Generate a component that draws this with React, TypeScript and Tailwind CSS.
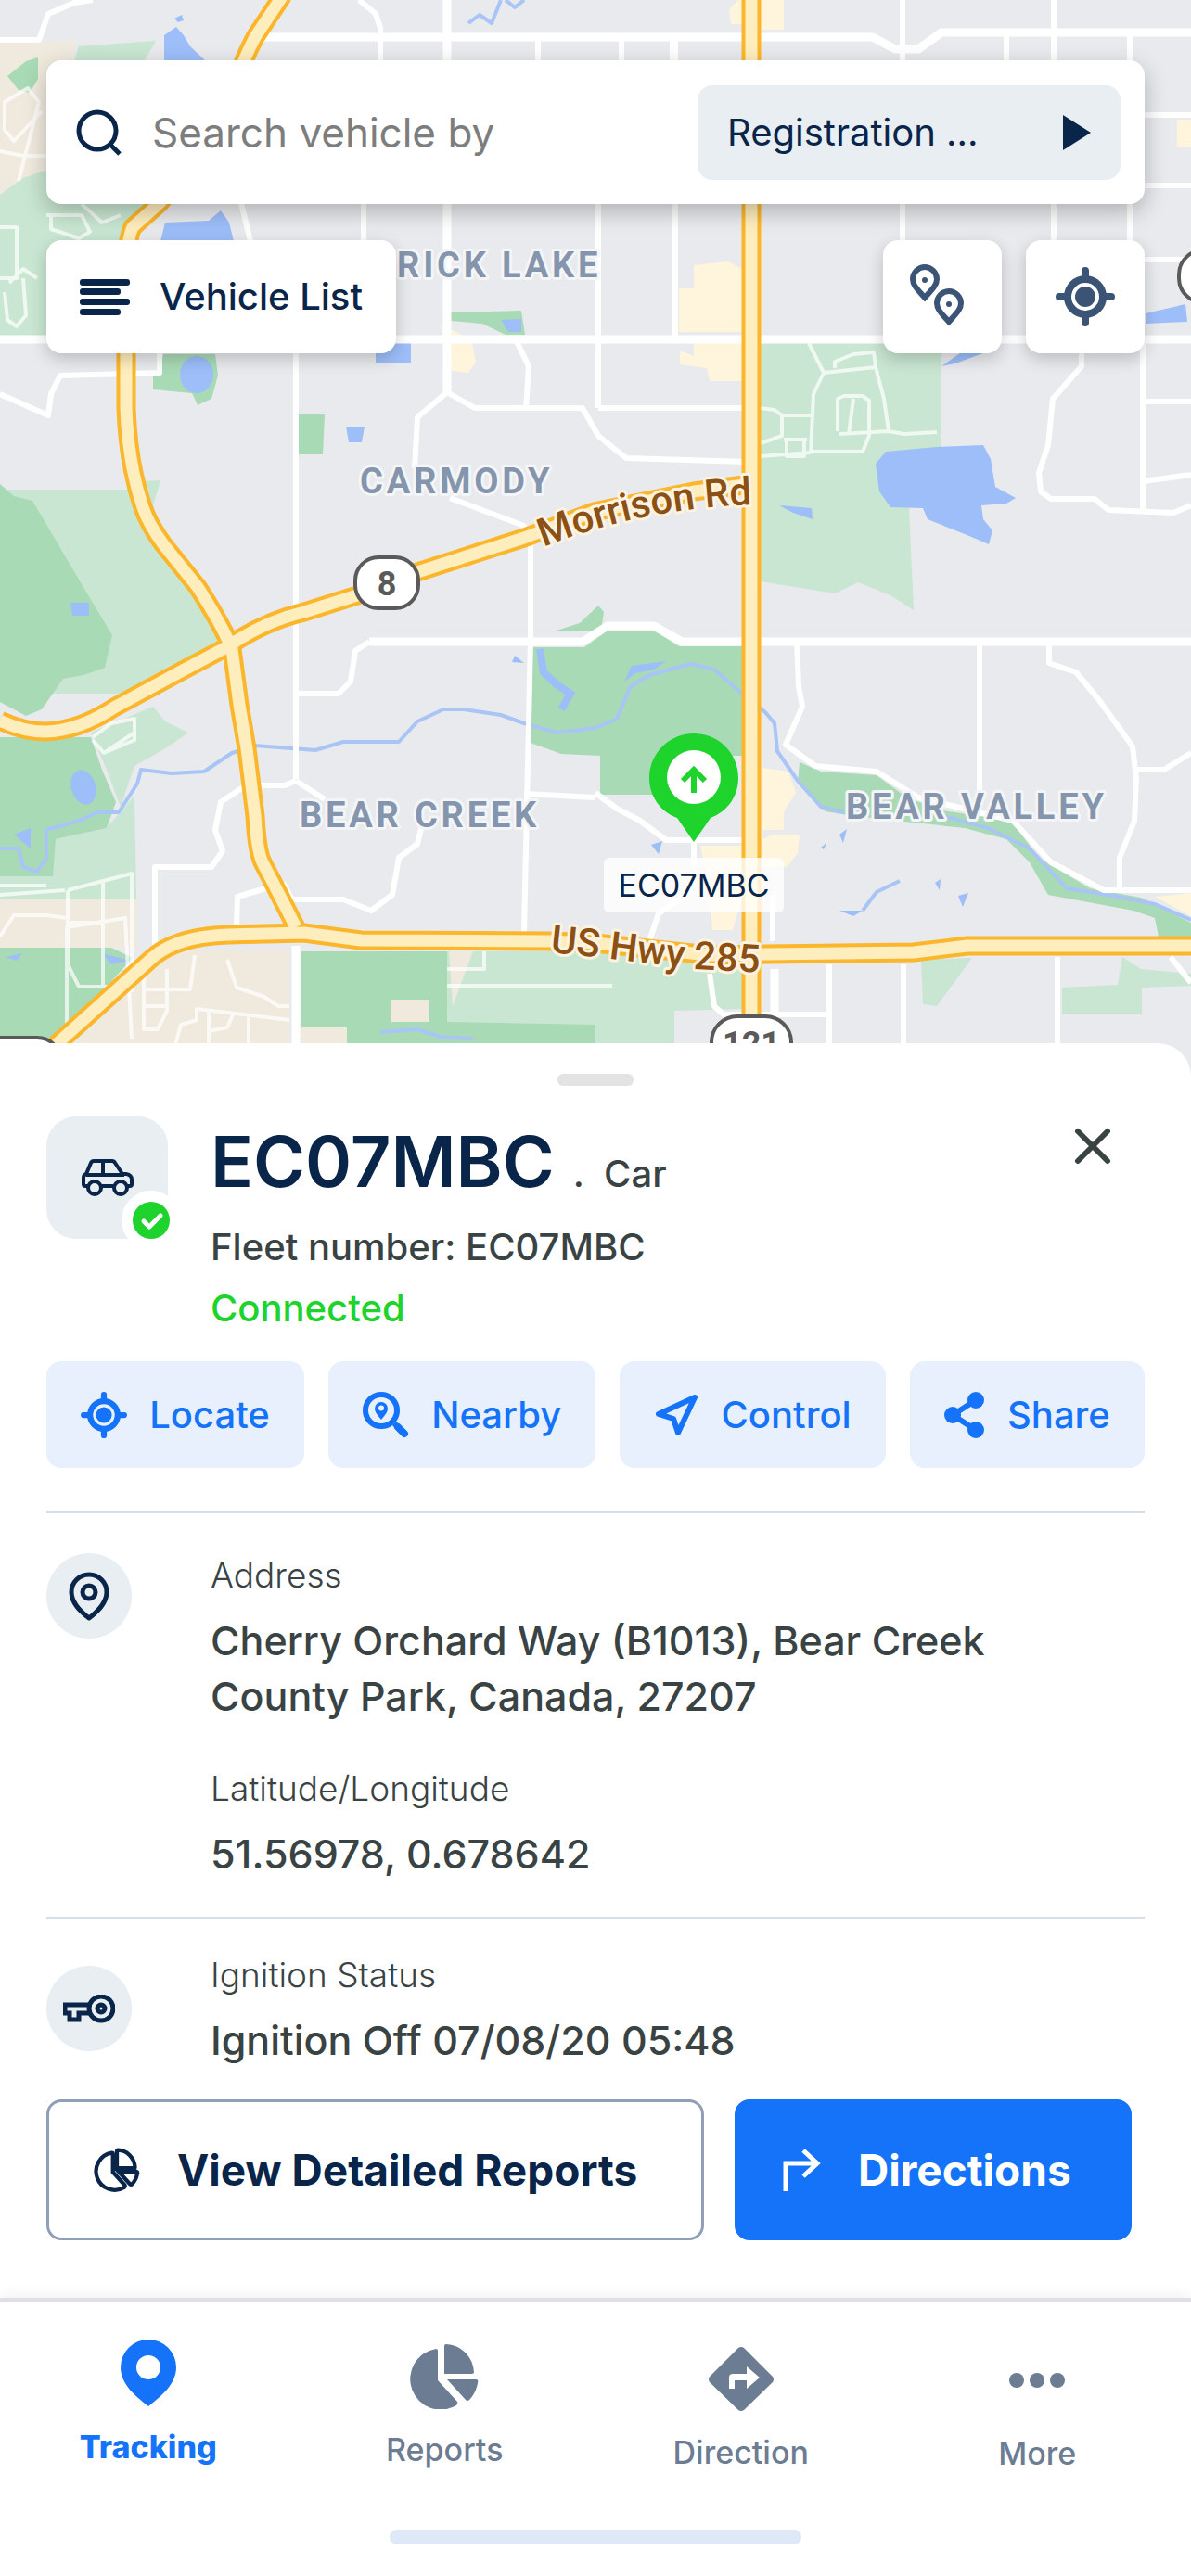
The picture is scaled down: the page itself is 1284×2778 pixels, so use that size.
import type { ReactNode } from "react";

const minorRoads = [
  "M0 43H42L52 15L80 3L100 0",
  "M387 0L405 15L410 30V65",
  "M580 40V65M670 40V65M725 40V65M1085 36V65",
  "M973 0V366M1136 0V366M1218 36V366",
  "M392 219V260M645 219V440M728 40V362",
  "M260 219L270 260M1234 124H1284M1234 200H1284M1234 280H1284",
  "M319 366V840M172 366V402L65 405L55 425L52 448L0 425",
  "M556 366L570 395L567 440M482 423L512 440H628L645 470L675 494L805 498",
  "M482 423L450 450L447 505M485 537L565 567L572 590V690L565 1005",
  "M319 748H365L378 735L383 702L398 692",
  "M645 440H805M1166 366V395L1135 430L1130 480L1120 510L1122 530L1133 538H1180L1195 550L1265 553L1284 545",
  "M1232 366V550M1232 433H1284M1232 519L1284 512",
  "M859 692L861 740L865 762L847 803L879 826L945 832L990 860L1092 885L1133 930L1190 960H1284",
  "M1056 692V853M1131 692V715L1160 725L1185 755L1221 805L1225 840L1223 885L1207 925V960M1225 830H1255L1284 812",
  "M642 855L665 872L690 885L718 906H805M748 906V960L710 985L700 1015M833 965V1015M565 856L642 860",
  "M319 842L307 847H265L238 865L232 895L240 918L228 935H167V1020M319 842L350 862",
  "M455 890L450 910L430 925L423 965L400 982L370 970H315L305 952M290 957L256 967L255 1000",
  "M765 1050L770 1085L780 1094H893M894 1040V1165M974 1040V1165M1140 1032V1165M1262 1032L1284 1060",
];

const majorRoads = [
  "M283 40H941L965 53H990L1015 35H1284",
  "M0 366H1284M482 0V423",
  "M398 692H628L655 675H705L735 692H1284",
  "M319 1020V1165M835 1045V1092",
];

const highways = [
  "M305 -5L275 40Q262 65 258 80L240 130L205 180L172 219L143 245Q136 260 136 300V440Q138 500 154 547Q160 565 176 587L213 633Q240 675 250 700L258 760L266 807L275 880Q277 920 284 932L295 953L319 1000",
  "M0 777Q25 789 49 789Q85 788 123 763L197 723L246 697Q285 670 328 660L385 642L450 617L565 580L640 552L748 530L810 522",
  "M810 -5V1100",
  "M40 1145L123 1070L164 1033Q190 1010 246 1008L328 1006L389 1014L592 1015L642 1017L765 1030L826 1029L985 1027L1043 1020H1290",
];

const lanes = [
  "M20 195L42 110L30 95L5 110V140L15 152L45 120M0 163L25 168H50",
  "M50 232H88L97 250L85 257L55 247V232M88 220L110 240L130 232M0 245H18V300H0M10 305L25 290L40 300M5 315L8 345L18 352L28 340L25 300",
  "M872 370L888 402L877 425L874 488L820 492M900 397V390L920 382L942 380L944 396L888 402M944 396L953 430L958 465L975 468L1010 466M958 465L905 468M903 465V430L910 427H930L937 432V470L930 487H874M920 430L915 468M874 448H843V470L820 478M845 474H870M848 474V492H867V475M820 440L835 442L843 448",
  "M72 1140V1000L135 990L142 1120M73 960L142 942V1070M111 948V1064M73 995H111M73 960V1040L85 1064H140M0 1010L15 987H50L73 990M0 955H50M0 965L70 960",
  "M100 798L112 812L145 798V775L120 780L100 795M112 812L145 790",
  "M155 1045V1110H170L180 1090V1045M155 1067H205L210 1030M155 1085H180M245 1035L255 1065L285 1075L300 1085H312M188 1130L195 1105L212 1100V1088L312 1100M225 1090V1125M268 1095V1130M225 1112L245 1108L252 1092",
  "M482 1045H522V1026M482 1063H660",
];

function FleetMap() {
  return (
    <svg
      viewBox="0 0 1284 1165"
      className="block w-full bg-[#e8eaed] font-['Roboto',sans-serif]"
      role="img"
      aria-label="Map of Bear Creek"
    >
      <g fill="#f0eade">
        <path d="M0 44H82L78 65L60 185L20 195L0 210ZM0 970H148V1022H0ZM40 1165L165 1045L190 1025H312V1165Z" />
      </g>
      <g fill="#c8e6d1">
        <path d="M85 50L168 44L155 66H80ZM0 210L25 192L60 180L180 200L130 262L126 362H0Z" />
        <path d="M0 528H140L155 519L173 518L165 545L190 610L242 690L140 748H0Z" />
        <path d="M98 790L165 762L178 778L203 790L180 806L145 826L130 870L115 830ZM58 910L60 905L115 893L145 858L147 970H0V945H57Z" />
        <path d="M820 370H1015V485L980 550L985 658L960 642L925 628L900 640L820 627Z" />
        <path d="M993 1035L1048 1033L1010 1085L995 1083ZM1145 1065L1205 1062L1210 1032L1230 1045L1284 1050V1063L1231 1065V1093H1145Z" />
      </g>
      <g fill="#a8dab5">
        <path d="M8 82L28 66L41 62V85L32 100L20 97ZM0 522L15 535L35 540L85 625L121 685L113 720L90 728L68 732L45 765L28 772L0 757Z" />
        <path d="M0 795H98L110 830L125 865L115 893L60 905L57 945H0ZM0 1022H120L143 1033L50 1135H0Z" />
        <path d="M176 382H232L235 405L228 430L213 437L207 424L165 420V406L172 402ZM320 447H350L348 490H322ZM486 337L562 335L566 361H545L520 349L486 346Z" />
        <path d="M600 680L625 672L645 653L651 660L648 680ZM574 698H630L655 680H705L732 697H800V815H786V857H647V815L605 813L572 801Z" />
        <path d="M862 822L885 832L945 836L975 858L1010 873L1090 885L1120 925L1175 958L1230 968L1284 995V1010H1249L1245 990L1222 982L1130 965L1110 930L1085 905L1040 893L920 880L890 875L860 845Z" />
        <path d="M325 1026H642V1165H325Z" />
      </g>
      <path fill="#c8e6d1" d="M482 1026H770L800 1050V1088L727 1090V1165H642V1105L482 1102Z" />
      <path fill="#f0eade" d="M422 1078H463V1102H422ZM325 1107H374V1130H325ZM484 1026H510L488 1085Z" />
      <g fill="#fef5dc">
        <path d="M748 286L785 282L800 290V358H732V311H748ZM748 370H800V411H765L762 397L733 393V378L748 384ZM786 10L796 0H845V32H820V26H788Z" />
        <path d="M475 350L508 366L513 390L505 402L487 400L478 366ZM822 828L850 832L858 855L845 875V895H822ZM833 900H862L860 920L848 935H822V905ZM755 912H802V960L790 1003H768L765 960ZM1245 967L1284 963V988ZM1269 129H1284V158H1269Z" />
      </g>
      <g fill="#9dbef9">
        <path d="M177 66V38L190 29L198 38L205 50L222 66ZM188 20L196 16L198 22L192 24ZM173 260L178 240L225 238L238 227L247 240L252 260ZM405 370H443V391H405ZM540 345L562 344V358H548ZM373 460H393L390 477H376ZM76 650H96V664H78Z" />
        <path d="M944 500L955 487L1010 482L1060 480L1068 495L1073 525L1095 537L1085 543L1058 545L1060 560L1070 572L1066 587L1045 578L1000 560L995 548L960 547L948 530Z" />
        <path d="M840 545L875 548L876 560L855 553ZM1015 395L1035 381L1065 379L1030 392ZM1235 338L1278 328L1280 347L1235 349ZM681 718L718 713L705 722L685 726L673 735ZM15 900L33 893V915ZM110 1028L140 1036L120 1040ZM6 1032L24 1028L18 1036ZM702 911L714 907L710 921ZM905 900L913 894L909 909ZM885 914L891 909L888 916ZM905 982H930L920 988ZM1033 966L1044 963L1038 978ZM1008 952L1014 948L1013 960ZM555 707L565 715L552 714Z" />
        <ellipse cx="212" cy="404" rx="18" ry="20" />
        <ellipse cx="90" cy="849" rx="13" ry="19" transform="rotate(-16 90 849)" />
      </g>
      <g fill="none" stroke="#a9c5f6" strokeWidth="4" strokeLinejoin="round">
        <path d="M0 915H20L25 935L40 940L50 925V895L85 885L105 876H128L148 845L152 830L185 834L220 832L250 812L275 804L340 809L370 800H430L450 778L478 765H500L540 771L565 780L600 790L642 785L665 775L680 740L700 728L745 716L770 722L800 748L825 768L835 780L838 810L860 842L885 870L910 876" />
        <path d="M1010 878L1065 893L1110 915L1150 958L1200 966L1245 975L1284 992M930 982L945 962L970 950M505 25L517 16L530 25L540 0M545 0L555 8L565 0M410 1113L450 1110L475 1118L510 1120" />
      </g>
      <path d="M582 700L586 725L600 738L615 748L605 765" fill="none" stroke="#9dbef9" strokeWidth="8" />

      <g fill="none" stroke="#ffffff" strokeOpacity="0.7" strokeWidth="4" strokeLinejoin="round">
        {lanes.map((d) => (
          <path key={d} d={d} />
        ))}
      </g>
      <g fill="none" stroke="#ffffff" strokeWidth="6" strokeLinejoin="round">
        {minorRoads.map((d) => (
          <path key={d} d={d} />
        ))}
      </g>
      <g fill="none" stroke="#ffffff" strokeWidth="9" strokeLinejoin="round">
        {majorRoads.map((d) => (
          <path key={d} d={d} />
        ))}
      </g>
      <g fill="none" stroke="#fbb62b" strokeWidth="21" strokeLinejoin="round">
        {highways.map((d) => (
          <path key={d} d={d} />
        ))}
      </g>
      <g fill="none" stroke="#feedbd" strokeWidth="13" strokeLinejoin="round">
        {highways.map((d) => (
          <path key={d} d={d} />
        ))}
      </g>

      {/* route shields */}
      <g fill="#ffffff" stroke="#5a5a5a" strokeWidth="4">
        <rect x="383" y="601" width="68" height="55" rx="25" />
        <rect x="767" y="1096" width="86" height="64" rx="28" />
        <rect x="1271" y="270" width="80" height="56" rx="26" />
        <rect x="-30" y="1119" width="96" height="56" rx="26" />
      </g>
      <g fill="#5a5a5a" textAnchor="middle" className="text-[36px] font-bold">
        <text x="417" y="642">8</text>
        <text x="810" y="1138">121</text>
      </g>

      <g
        fill="#8595ad"
        stroke="#f4f5f7"
        strokeWidth="6"
        strokeLinejoin="round"
        paintOrder="stroke"
        className="text-[38px] font-bold tracking-widest"
      >
        <text x="400" y="299">BRICK LAKE</text>
        <text x="388" y="532">CARMODY</text>
        <text x="323" y="892">BEAR CREEK</text>
        <text x="912" y="883">BEAR VALLEY</text>
      </g>

      <path id="morrison" d="M586 590Q690 548 815 544" fill="none" />
      <path id="hwy285" d="M593 1027L650 1033L750 1045L840 1050" fill="none" />
      <g
        fill="#8c5014"
        stroke="#fdf3e0"
        strokeWidth="6"
        strokeLinejoin="round"
        paintOrder="stroke"
        className="text-[42px] font-medium"
      >
        <text>
          <textPath href="#morrison">Morrison Rd</textPath>
        </text>
        <text>
          <textPath href="#hwy285">US Hwy 285</textPath>
        </text>
      </g>

      {/* vehicle pin */}
      <path
        fill="#1dd32c"
        d="M748 791C722 791 700 812 700 839C700 858 711 875 730 882L748 908L766 882C785 875 796 858 796 839C796 812 774 791 748 791Z"
      />
      <circle cx="748" cy="838" r="29" fill="#ffffff" />
      <path d="M748 855V831M736 842L748 830L760 842" fill="none" stroke="#1dd32c" strokeWidth="6" />
      <rect x="651" y="925" width="194" height="59" rx="6" fill="#ffffff" fillOpacity="0.8" />
      <text
        x="748"
        y="967"
        textAnchor="middle"
        fill="#0a254a"
        className="font-['Inter',sans-serif] text-[34px]"
      >
        EC07MBC
      </text>
    </svg>
  );
}

function LocateIcon({ className }: { className: string }) {
  return (
    <svg viewBox="0 0 64 64" className={className} fill="none" stroke="currentColor" aria-hidden="true">
      <circle cx="32" cy="32" r="19" strokeWidth="8" />
      <circle cx="32" cy="32" r="11" fill="currentColor" stroke="none" />
      <path d="M32 4V12M32 52V60M4 32H12M52 32H60" strokeWidth="8" strokeLinecap="round" />
    </svg>
  );
}

function PinsIcon() {
  return (
    <svg viewBox="0 0 72 70" className="h-[70px] w-[72px]" fill="none" stroke="currentColor" strokeWidth="6" aria-hidden="true">
      <path d="M17 36C10 28 4 23 4 16C4 9 10 3 17 3S30 9 30 16C30 23 24 28 17 36Z" />
      <path d="M43 62C36 54 30 49 30 42C30 35 36 29 43 29S56 35 56 42C56 49 50 54 43 62Z" />
      <circle cx="17" cy="17" r="3" fill="currentColor" stroke="none" />
      <circle cx="43" cy="43" r="3" fill="currentColor" stroke="none" />
    </svg>
  );
}

function NearbyIcon() {
  return (
    <svg viewBox="0 0 50 50" className="size-[50px]" fill="none" stroke="currentColor" aria-hidden="true">
      <circle cx="20" cy="20" r="17" strokeWidth="6" />
      <path d="M34 34L37 37" strokeWidth="6" />
      <path d="M38 38L45 45" strokeWidth="8" strokeLinecap="round" />
      <path
        fill="currentColor"
        stroke="none"
        fillRule="evenodd"
        d="M20 30C16 25 13 22 13 18A7 7 0 0 1 27 18C27 22 24 25 20 30ZM20 14.500A3 3 0 1 0 20 20.500A3 3 0 1 0 20 14.500Z"
      />
    </svg>
  );
}

function ControlIcon() {
  return (
    <svg viewBox="0 0 48 48" className="size-[48px]" fill="none" stroke="currentColor" strokeWidth="6" strokeLinejoin="round" aria-hidden="true">
      <path d="M43 5L4 23L20 28L25 43Z" />
    </svg>
  );
}

function ShareIcon() {
  return (
    <svg viewBox="0 0 44 50" className="h-[50px] w-[44px]" fill="currentColor" aria-hidden="true">
      <path d="M34 9L9 25L34 41" fill="none" stroke="currentColor" strokeWidth="6" />
      <circle cx="34" cy="9" r="9" />
      <circle cx="9" cy="25" r="9" />
      <circle cx="34" cy="41" r="9" />
    </svg>
  );
}

function CarIcon() {
  return (
    <svg viewBox="0 0 56 40" className="h-[40px] w-[56px]" fill="none" stroke="currentColor" strokeWidth="4" strokeLinejoin="round" aria-hidden="true">
      <path d="M7 29H4Q2 29 2 27V20Q2 17 5 16L10 4Q11 2 13 2H33Q35 2 36 4L44 16H48Q54 17 54 22V27Q54 29 52 29H50" />
      <path d="M5 17H46M23 2V16M22 29H35" />
      <circle cx="14" cy="31" r="7" />
      <circle cx="42" cy="31" r="7" />
    </svg>
  );
}

function AddressIcon() {
  return (
    <svg viewBox="0 0 44 53" className="h-[53px] w-[44px]" fill="none" stroke="currentColor" strokeWidth="5" strokeLinejoin="round" aria-hidden="true">
      <path d="M22 50C13 43 3 34 3 22A19 19 0 0 1 41 22C41 34 31 43 22 50Z" />
      <circle cx="22" cy="22" r="7" />
    </svg>
  );
}

function KeyIcon() {
  return (
    <svg viewBox="0 0 56 31" className="h-[31px] w-[56px]" fill="none" stroke="currentColor" strokeWidth="5" aria-hidden="true">
      <path d="M29 11H2V20H7V27H17V20H29" />
      <circle cx="41" cy="15" r="13" />
      <circle cx="41" cy="15" r="4" />
    </svg>
  );
}

const pieSlices =
  "M28 5Q30 5 30 7V39L51 62Q52 64 50 66A33 33 0 1 1 28 5ZM37 2Q37 0 39 0A31 32 0 0 1 69 30Q69 32 67 32H37ZM40 38H72Q74 39 73 42A34 34 0 0 1 64 60Q62 62 60 60Z";

function VehicleHeader() {
  return (
    <div className="flex items-start">
      <div className="relative flex h-[132px] w-[131px] shrink-0 items-center justify-center rounded-4xl bg-[#e9eef2] text-[#0a254a]">
        <CarIcon />
        <span className="absolute -right-[14px] -bottom-3 flex size-[64px] items-center justify-center rounded-full bg-white">
          <svg viewBox="0 0 40 40" className="size-[40px]" aria-hidden="true">
            <circle cx="20" cy="20" r="20" fill="#1dd32c" />
            <path d="M12 21L18 27L30 15" fill="none" stroke="#ffffff" strokeWidth="5" strokeLinecap="round" strokeLinejoin="round" />
          </svg>
        </span>
      </div>
      <div className="ml-[46px] grow pt-2 text-[#3a4344]">
        <div className="flex items-baseline gap-5">
          <h1 className="text-[76px] leading-[80px] font-semibold text-[#0a254a]">EC07MBC</h1>
          <span className="text-[40px] leading-none font-medium">.&nbsp; Car</span>
        </div>
        <p className="mt-5 text-[40px] leading-[66px] font-medium">Fleet number: EC07MBC</p>
        <p className="text-[40px] leading-[66px] font-medium text-[#1dd32c]">Connected</p>
      </div>
      <button aria-label="Close" className="mt-1 mr-7 p-2 text-[#3a4344]">
        <svg viewBox="0 0 40 40" className="size-[40px]" stroke="currentColor" strokeWidth="6" strokeLinecap="round">
          <path d="M4 4L36 36M36 4L4 36" />
        </svg>
      </button>
    </div>
  );
}

function ActionButton({ icon, label }: { icon: ReactNode; label: string }) {
  return (
    <button className="flex h-[115px] grow items-center justify-center gap-6 rounded-2xl bg-[#e8f0fe] text-[40px] font-medium text-[#1473f9]">
      {icon}
      {label}
    </button>
  );
}

function Detail({ label, children }: { label: string; children: ReactNode }) {
  return (
    <div>
      <dt className="text-[37px] leading-[48px] font-light">{label}</dt>
      <dd className="mt-4 text-[43px] leading-[60px] font-medium">{children}</dd>
    </div>
  );
}

function NavItem({ icon, label, active }: { icon: ReactNode; label: string; active?: boolean }) {
  return (
    <a
      href="#"
      className={
        active
          ? "flex flex-col items-center gap-6 text-[34px] leading-[40px] font-extrabold text-[#1473f9]"
          : "flex flex-col items-center gap-6 text-[34px] leading-[40px] font-medium text-[#6b7c93]"
      }
    >
      {icon}
      {label}
    </a>
  );
}

export default function App() {
  return (
    <div className="min-h-screen bg-white font-['Inter',sans-serif]">
      <div className="relative">
        <FleetMap />
        <div className="absolute inset-x-0 top-0 px-[50px] pt-[65px] text-[#0a254a]">
          <div className="flex h-[155px] items-center rounded-2xl bg-white pr-[26px] pl-8 shadow-[0_8px_24px_rgba(0,0,0,0.25)]">
            <svg viewBox="0 0 50 50" className="size-[50px] shrink-0" fill="none" stroke="currentColor" strokeWidth="5" aria-hidden="true">
              <circle cx="23" cy="23" r="20" />
              <path d="M37 38L47 48" />
            </svg>
            <input
              type="text"
              aria-label="Search vehicle"
              placeholder="Search vehicle by"
              className="ml-8 w-0 grow text-[44px] outline-none placeholder:text-[#7d7d7d]"
            />
            <div className="relative">
              <select
                aria-label="Search field"
                className="h-[102px] w-[456px] appearance-none rounded-2xl bg-[#e9eef2] pl-8 text-[40px] outline-none"
              >
                <option>Registration ...</option>
              </select>
              <svg viewBox="0 0 30 38" className="pointer-events-none absolute top-8 right-8 h-[38px] w-[30px]" fill="currentColor" aria-hidden="true">
                <path d="M0 0L30 19L0 38Z" />
              </svg>
            </div>
          </div>
          <div className="mt-[39px] flex gap-[26px]">
            <button className="mr-auto flex h-[122px] items-center gap-8 rounded-2xl bg-white px-9 text-[40px] font-medium shadow-[0_6px_18px_rgba(0,0,0,0.2)]">
              <svg viewBox="0 0 54 39" className="h-[39px] w-[54px]" fill="currentColor" aria-hidden="true">
                <rect width="54" height="7" rx="3" />
                <rect y="10" width="44" height="7" rx="3" />
                <rect y="21" width="54" height="7" rx="3" />
                <rect y="32" width="44" height="7" rx="3" />
              </svg>
              Vehicle List
            </button>
            <button
              aria-label="Show all vehicles"
              className="flex h-[122px] w-[128px] items-center justify-center rounded-2xl bg-white text-[#3b5375] shadow-[0_6px_18px_rgba(0,0,0,0.2)]"
            >
              <PinsIcon />
            </button>
            <button
              aria-label="My location"
              className="flex h-[122px] w-[128px] items-center justify-center rounded-2xl bg-white text-[#3b5375] shadow-[0_6px_18px_rgba(0,0,0,0.2)]"
            >
              <LocateIcon className="size-[64px]" />
            </button>
          </div>
        </div>
      </div>

      <main className="relative -mt-10 rounded-t-[36px] bg-white px-[50px] pt-[33px] pb-[62px]">
        <div className="mx-auto mb-[33px] h-[13px] w-[82px] rounded-md bg-[#e3e3e3]" />
        <VehicleHeader />
        <div className="mt-6 flex gap-[26px]">
          <ActionButton icon={<LocateIcon className="size-[50px]" />} label="Locate" />
          <ActionButton icon={<NearbyIcon />} label="Nearby" />
          <ActionButton icon={<ControlIcon />} label="Control" />
          <ActionButton icon={<ShareIcon />} label="Share" />
        </div>

        <section className="mt-[46px] flex items-start gap-[85px] border-t-3 border-[#d9dfe7] pt-[43px] text-[#3a4344]">
          <span className="flex size-[92px] shrink-0 items-center justify-center rounded-full bg-[#e9eef2] text-[#0a254a]">
            <AddressIcon />
          </span>
          <dl className="flex flex-col gap-[46px]">
            <Detail label="Address">
              Cherry Orchard Way (B1013), Bear Creek
              <br />
              County Park, Canada, 27207
            </Detail>
            <Detail label="Latitude/Longitude">51.56978, 0.678642</Detail>
          </dl>
        </section>
        <section className="mt-[38px] flex items-start gap-[85px] border-t-3 border-[#d9dfe7] pt-9 text-[#3a4344]">
          <span className="mt-[14px] flex size-[92px] shrink-0 items-center justify-center rounded-full bg-[#e9eef2] text-[#0a254a]">
            <KeyIcon />
          </span>
          <dl>
            <Detail label="Ignition Status">Ignition Off 07/08/20 05:48</Detail>
          </dl>
        </section>

        <div className="mt-[34px] mr-[14px] flex gap-[33px] text-[46px] font-bold">
          <button className="flex h-[152px] grow items-center gap-10 rounded-2xl border-3 border-[#909fb5] pl-12 text-[#0a254a]">
            <svg viewBox="-4 -4 82 78" className="h-[48px] w-[50px]" fill="none" stroke="currentColor" strokeWidth="7" aria-hidden="true">
              <path d={pieSlices} />
            </svg>
            View Detailed Reports
          </button>
          <button className="flex h-[152px] w-[428px] items-center gap-10 rounded-2xl bg-[#1473f9] pl-[52px] text-white">
            <svg viewBox="0 0 41 46" className="h-[46px] w-[41px]" fill="none" stroke="currentColor" strokeWidth="5" aria-hidden="true">
              <path d="M3 46V16H36M22 2L37 16L22 30" />
            </svg>
            Directions
          </button>
        </div>
      </main>

      <nav className="relative border-t-4 border-[#dde0e6] bg-white pt-[41px] pb-[34px] shadow-[0_-4px_12px_rgba(0,0,0,0.05)]">
        <div className="grid grid-cols-4 pr-1.5">
          <NavItem
            active
            label="Tracking"
            icon={
              <svg viewBox="0 0 60 72" className="h-[72px] w-[60px]" fill="currentColor" aria-hidden="true">
                <path
                  fillRule="evenodd"
                  d="M30 0A30 30 0 0 0 0 30C0 48 16 61 30 72C44 61 60 48 60 30A30 30 0 0 0 30 0ZM30 17A13 13 0 1 1 30 43A13 13 0 1 1 30 17Z"
                />
              </svg>
            }
          />
          <NavItem
            label="Reports"
            icon={
              <svg viewBox="0 -5 74 75" className="h-[75px] w-[74px]" fill="currentColor" aria-hidden="true">
                <path d={pieSlices} />
              </svg>
            }
          />
          <NavItem
            label="Direction"
            icon={
              <svg viewBox="0 -8 70 78" className="h-[78px] w-[70px]" fill="currentColor" aria-hidden="true">
                <path d="M32 1Q35 -1 38 1L69 32Q71 35 69 38L38 68Q35 70 32 68L1 38Q-1 35 1 32Z" />
                <path fill="#ffffff" d="M22 45V33Q22 29 26 29H41V21L55 33L41 45V36H28V45Z" />
              </svg>
            }
          />
          <NavItem
            label="More"
            icon={
              <svg viewBox="0 -35 62 79" className="h-[79px] w-[62px]" fill="currentColor" aria-hidden="true">
                <circle cx="9" cy="9" r="8" />
                <circle cx="31" cy="9" r="8" />
                <circle cx="53" cy="9" r="8" />
              </svg>
            }
          />
        </div>
        <div className="mx-auto mt-[62px] h-[16px] w-[444px] rounded-full bg-[#dfe8f6]" />
      </nav>
    </div>
  );
}
